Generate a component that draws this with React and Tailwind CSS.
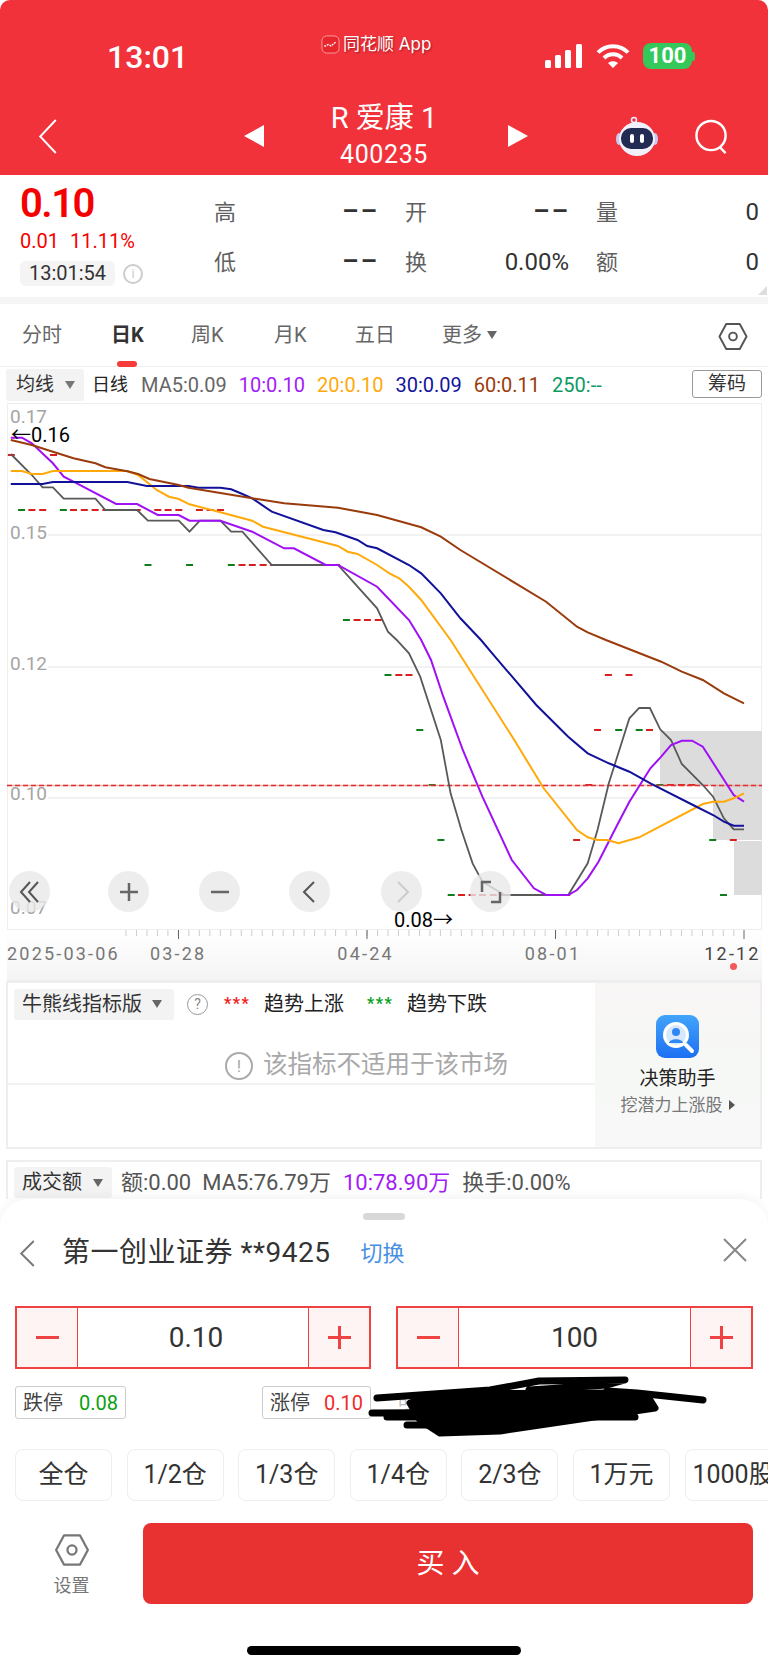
import React from 'react';

const font = "font-['Roboto','Noto_Sans_CJK_SC',sans-serif]";

// chart points are read off the reference: x in 1/2.0417 px, y in 1/3 px from y=300
const toPoints = (arr) => arr.map(([x, y]) => `${(x / 2.0417).toFixed(1)},${(300 + y / 3).toFixed(1)}`).join(' ');

const grayLine = [[22,462],[65,525],[87,562],[108,562],[130,596],[195,596],[215,630],[280,630],[302,662],[365,662],[387,695],[408,662],[450,662],[472,695],[495,695],[555,795],[690,795],[770,925],[792,995],[810,1020],[835,1060],[858,1130],[900,1320],[920,1480],[942,1590],[965,1690],[985,1745],[1030,1785],[1160,1785],[1200,1690],[1220,1590],[1243,1450],[1285,1255],[1305,1224],[1327,1224],[1348,1288],[1370,1320],[1392,1392],[1435,1455],[1456,1490],[1478,1555],[1498,1588],[1519,1588]];
const purpleLine = [[22,413],[45,413],[65,430],[108,490],[130,530],[150,545],[237,612],[280,612],[322,645],[365,645],[387,662],[450,662],[515,695],[580,745],[600,745],[665,795],[690,795],[770,860],[835,960],[860,1020],[880,1080],[905,1190],[945,1350],[985,1490],[1045,1680],[1090,1765],[1115,1785],[1160,1785],[1178,1770],[1200,1735],[1222,1685],[1262,1570],[1285,1505],[1328,1405],[1350,1370],[1370,1335],[1392,1322],[1413,1322],[1435,1340],[1498,1485],[1519,1505]];
const orangeLine = [[22,513],[45,513],[65,522],[87,522],[108,513],[260,513],[282,525],[320,570],[345,590],[365,597],[387,613],[450,637],[515,662],[537,680],[690,738],[710,755],[730,762],[770,795],[795,820],[815,835],[835,860],[860,900],[920,1020],[1050,1320],[1110,1465],[1178,1590],[1200,1612],[1220,1620],[1240,1620],[1263,1630],[1305,1612],[1435,1512],[1456,1505],[1478,1505],[1498,1495],[1519,1480]];
const blueLine = [[22,552],[87,552],[108,546],[260,546],[300,558],[385,558],[405,563],[450,563],[472,568],[495,582],[515,595],[555,635],[660,690],[685,697],[730,720],[750,738],[770,745],[835,795],[860,820],[900,880],[940,955],[982,1020],[1005,1060],[1095,1215],[1160,1310],[1200,1360],[1243,1390],[1285,1415],[1328,1450],[1415,1515],[1456,1545],[1478,1565],[1498,1577],[1519,1577]];
const brownLine = [[22,420],[65,435],[108,455],[150,475],[195,490],[215,502],[260,514],[282,522],[305,537],[365,555],[385,563],[515,595],[580,610],[690,623],[770,645],[860,682],[900,710],[940,750],[1115,905],[1178,980],[1200,997],[1237,1020],[1350,1085],[1392,1115],[1435,1140],[1478,1180],[1519,1210]];

const RED = '#d81e1e';
const GREEN = '#0f7d1a';
const dashRows = [
  [455, RED, [16, 102]],
  [510, GREEN, [37, 122]],
  [510, RED, [58, 80, 143, 165, 187, 209, 230, 252, 273, 315, 336, 358, 400, 422, 443]],
  [565, GREEN, [295, 380, 465]],
  [565, RED, [487, 508, 530, 551, 573, 594, 616, 637, 659, 680]],
  [620, GREEN, [700]],
  [620, RED, [722, 743, 765]],
  [675, GREEN, [785]],
  [675, RED, [807, 828, 1235, 1277]],
  [730, GREEN, [850, 1256, 1298]],
  [730, RED, [1213, 1319]],
  [785, GREEN, [875, 1340]],
  [785, RED, [1195, 1362, 1384, 1405]],
  [840, GREEN, [893, 1448]],
  [840, RED, [1170, 1490]],
  [895, GREEN, [914, 1470]],
  [895, RED, [935, 957, 978, 1000, 1021, 1043, 1064, 1085, 1107, 1128, 1150]],
];

const HexIcon = ({ className }) => (
  <svg viewBox="0 0 32 30" fill="none" className={className}>
    <path d="M9 2h14l7 13-7 13H9L2 15z" stroke="currentColor" strokeWidth="2" strokeLinejoin="round" />
    <circle cx="16" cy="15" r="4" stroke="currentColor" strokeWidth="2" />
  </svg>
);

const Caret = ({ className }) => (
  <span className={`w-0 h-0 border-x-[5px] border-x-transparent border-t-[8px] ${className}`} />
);

function StatusBar() {
  return (
    <div className="relative h-[85px] text-white">
      <div className="absolute left-[107px] top-[40px] text-[32px] leading-[34px] font-medium">13:01</div>
      <div className="absolute left-[321px] top-[34px] flex items-center gap-[3px]">
        <svg viewBox="0 0 20 20" className="w-[19px] h-[19px]">
          <rect x="1" y="1" width="18" height="18" rx="5" fill="#e8262d" stroke="#f7a0a0" />
          <path d="M3.5 12l4-2 3 1.500 5-4" fill="none" stroke="#fff" strokeWidth="1.500" strokeDasharray="2 1" />
        </svg>
        <span className="text-[17px] leading-[20px] font-['Inter','Noto_Sans_CJK_SC',sans-serif] [text-shadow:1px_1px_2px_rgba(90,0,0,0.5)]">同花顺 App</span>
      </div>
      <svg viewBox="0 0 38 24" className="absolute left-[545px] top-[44px] w-[38px] h-[24px]" fill="#fff">
        <rect x="0" y="16" width="6" height="8" rx="1.500" />
        <rect x="10" y="11" width="6" height="13" rx="1.500" />
        <rect x="20" y="6" width="6" height="18" rx="1.500" />
        <rect x="31" y="0" width="6" height="24" rx="1.500" />
      </svg>
      <svg viewBox="0 0 34 26" className="absolute left-[596px] top-[43px] w-[34px] h-[26px]" fill="none" stroke="#fff" strokeWidth="4">
        <path d="M2 9.500C10 1 24 1 32 9.500" />
        <path d="M8 15c5-5 13-5 18 0" />
        <path d="M17 25l-5-5c3-2.500 7-2.500 10 0z" fill="#fff" stroke="none" />
      </svg>
      <div className="absolute left-[643px] top-[43px] flex items-center">
        <div className="w-[49px] h-[26px] rounded-[8px] bg-[#34c759] text-[22px] leading-[26px] font-bold text-center">100</div>
        <div className="w-[3px] h-[9px] rounded-r-[2px] bg-[#34c759]" />
      </div>
    </div>
  );
}

function NavBar() {
  return (
    <div className="relative h-[90px] text-white">
      <svg viewBox="0 0 20 36" className="absolute left-[38px] top-[34px] w-[20px] h-[35px]" fill="none" stroke="#fff" strokeWidth="2">
        <path d="M18 1L2 18l16 17" />
      </svg>
      <span className="absolute left-[244px] top-[40px] w-0 h-0 border-y-[11px] border-y-transparent border-r-[20px] border-r-white" />
      <span className="absolute left-[508px] top-[40px] w-0 h-0 border-y-[11px] border-y-transparent border-l-[20px] border-l-white" />
      <div className="flex flex-col items-center">
        <div className="h-[47px] pt-[15px] text-[29px] leading-[36px]">R 爱康 1</div>
        <div className="pt-[8px] text-[25px] leading-[30px] tracking-[0.6px]">400235</div>
      </div>
      <svg viewBox="0 0 42 40" className="absolute left-[616px] top-[31px] w-[42px] h-[40px]">
        <circle cx="18" cy="4" r="2.500" fill="none" stroke="#eef" strokeWidth="1.500" />
        <ellipse cx="3" cy="23" rx="3" ry="6" fill="#c9c8f2" />
        <ellipse cx="39" cy="23" rx="3" ry="6" fill="#c9c8f2" />
        <ellipse cx="21" cy="23" rx="18" ry="17" fill="#f2f1fb" />
        <rect x="5" y="12" width="32" height="21" rx="10" fill="#222c52" />
        <rect x="14" y="18" width="4" height="9" rx="2" fill="#fff" />
        <rect x="24" y="18" width="4" height="9" rx="2" fill="#fff" />
      </svg>
      <svg viewBox="0 0 36 36" className="absolute left-[694px] top-[34px] w-[36px] h-[35px]" fill="none" stroke="#fff" strokeWidth="2.500">
        <circle cx="17" cy="17" r="15" />
        <path d="M26 29l6 6" />
      </svg>
    </div>
  );
}

function QuoteCell({ label, value }) {
  return (
    <div className="flex justify-between items-center h-[50px]">
      <span className="text-[22px] text-[#5f5f5f]">{label}</span>
      {value === '--' ? (
        <span className="origin-right scale-x-[1.8] -translate-y-[2px] text-[26px] font-bold text-[#333]">--</span>
      ) : (
        <span className="text-[24px] text-[#333]">{value}</span>
      )}
    </div>
  );
}

function Quote() {
  return (
    <div className="relative flex h-[122px] bg-white">
      <div className="w-[214px] pl-[20px] pt-[6px] shrink-0">
        <div className="text-[40px] leading-[46px] font-semibold text-[#f50000] tracking-[-1.500px]">0.10</div>
        <div className="flex gap-[11px] text-[20px] leading-[22px] mt-[3px] text-[#f50000]">
          <span>0.01</span>
          <span>11.11%</span>
        </div>
        <div className="flex items-center gap-[8px] mt-[9px]">
          <span className="w-[95px] h-[25px] rounded-[6px] bg-[#f4f4f4] text-[20px] leading-[25px] text-center text-[#333]">13:01:54</span>
          <span className="w-[20px] h-[20px] rounded-full border-2 border-[#ccc] text-[13px] leading-[16px] text-center text-[#ccc]">i</span>
        </div>
      </div>
      <div className="grid grid-cols-[164px_164px_163px] gap-x-[27px] pt-[12px] h-fit">
        <QuoteCell label="高" value="--" />
        <QuoteCell label="开" value="--" />
        <QuoteCell label="量" value="0" />
        <QuoteCell label="低" value="--" />
        <QuoteCell label="换" value="0.00%" />
        <QuoteCell label="额" value="0" />
      </div>
      <span className="absolute right-[1px] bottom-[2px] w-0 h-0 border-l-[9px] border-l-transparent border-b-[9px] border-b-[#ddd]" />
    </div>
  );
}

function Tabs() {
  const tabs = [
    { text: '分时', w: 'w-[89px]' },
    { text: '日K', w: 'w-[80px]', active: true },
    { text: '周K', w: 'w-[83px]' },
    { text: '月K', w: 'w-[81px]' },
    { text: '五日', w: 'w-[87px]' },
  ];
  return (
    <div className="relative flex items-center h-[63px] pl-[22px] border-b border-[#eee] text-[20px] text-[#666]">
      {tabs.map(t => (
        <span key={t.text} className={`${t.w} ${t.active ? 'font-bold text-[#333]' : ''}`}>{t.text}</span>
      ))}
      <span className="flex items-center gap-[5px]">更多<Caret className="border-t-[#666]" /></span>
      <HexIcon className="absolute left-[717px] top-[18px] w-[32px] h-[29px] text-[#555]" />
      <span className="absolute left-[117px] bottom-[-1px] w-[20px] h-[6px] rounded-full bg-[#f93a3a]" />
    </div>
  );
}

function MaRow() {
  return (
    <div className="relative flex items-center h-[36px] pl-[6px] text-[20px] leading-[24px]">
      <div className="flex items-center w-[78px] h-[32px] pl-[10px] gap-[11px] rounded-[3px] bg-[#f3f3f3] text-[#333] text-[19px]">
        均线<Caret className="border-t-[#777]" />
      </div>
      <span className="ml-[8px] text-[18px] text-[#222]">日线</span>
      <span className="ml-[13px] text-[#666]">MA5:0.09</span>
      <span className="ml-[12px] text-[#a21cf5]">10:0.10</span>
      <span className="ml-[12px] text-[#ffa90a]">20:0.10</span>
      <span className="ml-[12px] text-[#14149c]">30:0.09</span>
      <span className="ml-[12px] text-[#9a3b0c]">60:0.11</span>
      <span className="ml-[12px] text-[#109a63]">250:--</span>
      <span className="absolute left-[692px] top-[3px] w-[70px] h-[28px] rounded-[3px] border border-[#999] text-center text-[19px] leading-[26px] text-[#333]">筹码</span>
    </div>
  );
}

const ChartButton = ({ children, className }) => (
  <span className={`flex items-center justify-center w-[41px] h-[41px] rounded-full bg-[#e8e8e8]/80 ${className}`}>{children}</span>
);

function Chart() {
  const iconCls = 'w-[24px] h-[24px]';
  return (
    <div className="relative w-[755px] h-[527px] ml-[7px] shadow-[inset_0_0_0_1px_#eee]">
      <svg viewBox="7 403 755 527" className="absolute inset-0 w-[755px] h-[527px]" fill="none">
        <path d="M48 535H761M48 667H761M48 798H761" stroke="#eee" strokeWidth="1.500" />
        <path d="M660 731h102v54h-102zM713 785h49v55h-49zM734 841h28v54h-28z" fill="#dcdcdc" />
        {dashRows.map(([y, color, xs], i) => xs.map(x => (
          <path key={`${i}-${x}`} d={`M${(x / 2.0417).toFixed(1)} ${y}h7`} stroke={color} strokeWidth="2" />
        )))}
        <path d="M7 785.500H762" stroke="#e87070" strokeOpacity="0.5" strokeWidth="1.500" />
        <path d="M7 785.500H762" stroke="#e03030" strokeWidth="1.500" strokeDasharray="5 3" />
        <polyline points={toPoints(grayLine)} stroke="#595959" strokeWidth="1.800" />
        <polyline points={toPoints(purpleLine)} stroke="#a010f5" strokeWidth="2" />
        <polyline points={toPoints(orangeLine)} stroke="#ffa90a" strokeWidth="2" />
        <polyline points={toPoints(blueLine)} stroke="#11119a" strokeWidth="2" />
        <polyline points={toPoints(brownLine)} stroke="#9a3b0c" strokeWidth="2" />
      </svg>

      <span className="absolute left-[3px] top-[6px] text-[19px] leading-[16px] text-[#a5a5a5]">0.17</span>
      <span className="absolute left-[4px] top-[22px] text-[20px] leading-[20px] text-black">←0.16</span>
      <span className="absolute left-[3px] top-[118px] text-[19px] leading-[24px] text-[#a5a5a5]">0.15</span>
      <span className="absolute left-[3px] top-[249px] text-[19px] leading-[24px] text-[#a5a5a5]">0.12</span>
      <span className="absolute left-[3px] top-[379px] text-[19px] leading-[24px] text-[#a5a5a5]">0.10</span>
      <span className="absolute left-[3px] top-[493px] text-[19px] leading-[24px] text-[#a5a5a5]">0.07</span>
      <span className="absolute left-[387px] top-[505px] text-[20px] leading-[24px] text-black">0.08→</span>

      <div className="absolute left-[2px] top-[468px] flex">
        <ChartButton>
          <svg viewBox="0 0 24 24" className={iconCls} fill="none" stroke="#555" strokeWidth="2"><path d="M12 2L3 12l9 10M20 2l-9 10 9 10" /></svg>
        </ChartButton>
        <ChartButton className="ml-[58px]">
          <svg viewBox="0 0 24 24" className={iconCls} fill="none" stroke="#666" strokeWidth="2.500"><path d="M12 3v18M3 12h18" /></svg>
        </ChartButton>
        <ChartButton className="ml-[50px]">
          <svg viewBox="0 0 24 24" className={iconCls} fill="none" stroke="#666" strokeWidth="2.500"><path d="M3 12h18" /></svg>
        </ChartButton>
        <ChartButton className="ml-[49px]">
          <svg viewBox="0 0 24 24" className={iconCls} fill="none" stroke="#555" strokeWidth="2"><path d="M16 2L6 12l10 10" /></svg>
        </ChartButton>
        <ChartButton className="ml-[51px]">
          <svg viewBox="0 0 24 24" className={iconCls} fill="none" stroke="#ccc" strokeWidth="2"><path d="M8 2l10 10L8 22" /></svg>
        </ChartButton>
        <ChartButton className="ml-[48px]">
          <svg viewBox="0 0 24 24" className={iconCls} fill="none" stroke="#666" strokeWidth="2.500"><path d="M3 12V2h9M21 12v10h-9" /></svg>
        </ChartButton>
      </div>
    </div>
  );
}

function XAxis() {
  const ticks = [];
  for (let x = 126; x <= 744; x += 10.48) ticks.push(x);
  return (
    <div className="relative h-[51px] w-[755px] ml-[7px] border-b border-[#eee] bg-gradient-to-b from-white to-[#f4f4f4]">
      <svg viewBox="7 0 755 12" className="absolute left-0 top-0 w-[755px] h-[12px]">
        {ticks.map(x => <path key={x} d={`M${x} 0v6`} stroke="#ccc" />)}
        {[178.5, 367, 555.5, 744].map(x => <path key={x} d={`M${x} 0v9`} stroke="#666" />)}
      </svg>
      <div className="flex pt-[12px] text-[18px] leading-[24px] tracking-[2.200px] text-[#777] whitespace-nowrap">
        <span className="shrink-0">2025-03-06</span>
        <span className="shrink-0 ml-[30px]">03-28</span>
        <span className="shrink-0 ml-[131px]">04-24</span>
        <span className="shrink-0 ml-[131px]">08-01</span>
        <span className="shrink-0 ml-[123px] text-[#444]">12-12</span>
      </div>
      <span className="absolute left-[723px] top-[33px] w-[7px] h-[7px] rounded-full bg-[#f25a5a]" />
    </div>
  );
}

function BullBear() {
  return (
    <div className="flex w-[756px] h-[168px] ml-[6px] border-2 border-[#eee] bg-white">
      <div className="relative w-[587px] shrink-0">
        <div className="flex items-center h-[41px] pl-[6px] pt-[1px]">
          <div className="flex items-center w-[160px] h-[31px] pl-[8px] gap-[10px] rounded-[3px] bg-[#f3f3f3] text-[20px] text-[#333]">
            牛熊线指标版<Caret className="border-t-[#666]" />
          </div>
          <span className="ml-[13px] w-[21px] h-[21px] rounded-full border border-[#999] text-[14px] leading-[19px] text-center text-[#888]">?</span>
          <span className="ml-[16px] w-[30px] text-[16px] font-bold tracking-[1.500px] text-[#f02020]">***</span>
          <span className="ml-[10px] text-[20px] text-[#222]">趋势上涨</span>
          <span className="ml-[23px] w-[30px] text-[16px] font-bold tracking-[1.500px] text-[#0aa020]">***</span>
          <span className="ml-[10px] text-[20px] text-[#222]">趋势下跌</span>
        </div>
        <div className="flex items-center h-[61px] pl-[217px] pt-[24px] border-b-2 border-[#f2f2f2] text-[24.500px] text-[#a8a8a8]">
          <span className="w-[28px] h-[28px] rounded-full border-2 border-[#aaa] text-[17px] leading-[24px] text-center">!</span>
          <span className="ml-[10px]">该指标不适用于该市场</span>
        </div>
      </div>
      <div className="flex-1 flex flex-col items-center pt-[32px] bg-gradient-to-b from-[#f9f6f6] via-[#f5f8f5] to-[#f8f8f8]">
        <svg viewBox="0 0 43 43" className="w-[43px] h-[43px]">
          <defs>
            <linearGradient id="aiBlue" x1="0" y1="0" x2="0" y2="1">
              <stop offset="0" stopColor="#42a4fb" />
              <stop offset="1" stopColor="#1d6ff2" />
            </linearGradient>
          </defs>
          <rect width="43" height="43" rx="9" fill="url(#aiBlue)" />
          <circle cx="20" cy="20" r="13" fill="#fff" />
          <circle cx="20" cy="20" r="10" fill="#d5e8fd" />
          <circle cx="20" cy="17" r="4" fill="#2f86f5" />
          <path d="M13 28c1-5 13-5 14 0z" fill="#2f86f5" />
          <path d="M30 30l6 6" stroke="#fff" strokeWidth="4" strokeLinecap="round" />
        </svg>
        <div className="mt-[8px] text-[19px] leading-[26px] text-[#222]">决策助手</div>
        <div className="flex items-center gap-[6px] text-[17px] leading-[26px] text-[#777]">
          挖潜力上涨股
          <span className="w-0 h-0 border-y-[5px] border-y-transparent border-l-[6px] border-l-[#555]" />
        </div>
      </div>
    </div>
  );
}

function Volume() {
  return (
    <div className="flex items-start w-[756px] h-[39px] ml-[6px] mt-[11px] pl-[6px] pt-[5px] border-x-2 border-t-2 border-[#eee] text-[22px] leading-[31px]">
      <div className="flex items-center w-[98px] h-[31px] pl-[8px] gap-[11px] rounded-[3px] bg-[#f3f3f3] text-[20px] text-[#333]">
        成交额<Caret className="border-t-[#666]" />
      </div>
      <span className="ml-[9px] text-[#555]">额:0.00</span>
      <span className="ml-[11px] text-[#555]">MA5:76.79万</span>
      <span className="ml-[12px] text-[#a21cf5]">10:78.90万</span>
      <span className="ml-[12px] text-[#555]">换手:0.00%</span>
    </div>
  );
}

function Stepper({ value, className, valueClass }) {
  return (
    <div className={`flex h-[63px] border-2 border-[#ef4343] ${className}`}>
      <span className="flex items-center justify-center w-[60px] bg-[#fff4f4]">
        <span className="w-[23px] h-[3px] bg-[#ef4343]" />
      </span>
      <span className={`flex-1 border-x border-[#ef4343] text-center text-[28px] leading-[59px] text-[#333] ${valueClass}`}>{value}</span>
      <span className="relative flex items-center justify-center w-[60px] bg-[#fff4f4]">
        <span className="w-[23px] h-[3px] bg-[#ef4343]" />
        <span className="absolute w-[3px] h-[23px] bg-[#ef4343]" />
      </span>
    </div>
  );
}

const LimitTag = ({ label, value, color, className }) => (
  <span className={`flex items-center justify-between h-[33px] px-[7px] rounded-[3px] border border-[#ccc] text-[20px] ${className}`}>
    <span className="text-[#444]">{label}</span>
    <span className={color}>{value}</span>
  </span>
);

function Sheet() {
  const presets = ['全仓', '1/2仓', '1/3仓', '1/4仓', '2/3仓', '1万元', '1000股'];
  return (
    <div className="relative h-[470px] rounded-t-[28px] bg-white shadow-[0_-4px_10px_rgba(0,0,0,0.04)] overflow-hidden">
      <div className="w-[42px] h-[7px] mx-auto mt-[14px] rounded-full bg-[#d8d8d8]" />
      <div className="relative flex items-center h-[52px] mt-[7px] pl-[62px]">
        <svg viewBox="0 0 16 28" className="absolute left-[19px] top-[13px] w-[16px] h-[27px]" fill="none" stroke="#777" strokeWidth="2"><path d="M15 1L2 14l13 13" /></svg>
        <span className="text-[28px] tracking-[0.5px] text-[#333]">第一创业证券 **9425</span>
        <span className="ml-[30px] text-[22px] text-[#4a90e2]">切换</span>
        <svg viewBox="0 0 24 24" className="absolute left-[723px] top-[11px] w-[24px] h-[24px]" fill="none" stroke="#888" strokeWidth="2"><path d="M1 1l22 22M23 1L1 23" /></svg>
      </div>
      <div className="flex gap-[25px] pl-[15px] mt-[27px]">
        <Stepper value="0.10" className="w-[356px]" valueClass="pl-[6px]" />
        <Stepper value="100" className="w-[357px]" />
      </div>
      <div className="relative flex pl-[15px] mt-[17px]">
        <LimitTag label="跌停" value="0.08" color="text-[#0aa00f]" className="w-[111px]" />
        <LimitTag label="涨停" value="0.10" color="text-[#f02a2a]" className="w-[109px] ml-[136px]" />
        <span className="ml-[26px] text-[16px] leading-[33px] text-[#bbb]">可</span>
        <svg viewBox="0 1366 768 80" className="absolute left-0 top-[-20px] w-[768px] h-[80px]" fill="#000" stroke="#000" strokeWidth="7" strokeLinecap="round" strokeLinejoin="round">
          <path d="M377 1398L490 1390L539 1381L625 1380L607 1385L529 1390" fill="none" />
          <path d="M607 1391L637 1393L703 1400" fill="none" />
          <path d="M440 1394L620 1393L650 1400L655 1408L560 1422L500 1431L440 1433L420 1420L410 1403z" />
          <path d="M372 1413L539 1412M387 1417L635 1417M407 1425L490 1425" fill="none" />
        </svg>
      </div>
      <div className="flex gap-[14.600px] pl-[15px] mt-[30px] w-[820px]">
        {presets.map(p => (
          <span key={p} className="w-[97px] h-[52px] shrink-0 rounded-[8px] border border-[#eee] text-center text-[25px] leading-[50px] text-[#333] whitespace-nowrap">{p}</span>
        ))}
      </div>
      <div className="flex mt-[22px] pl-[15px] pr-[15px]">
        <div className="flex flex-col items-center w-[113px] pt-[10px] text-[#777]">
          <HexIcon className="w-[38px] h-[34px]" />
          <span className="mt-[6px] text-[18px] leading-[26px]">设置</span>
        </div>
        <div className="flex-1 ml-[15px] h-[81px] rounded-[8px] bg-[#e83232] text-center text-[28px] leading-[81px] text-white">买 入</div>
      </div>
      <div className="absolute left-[247px] top-[447px] w-[274px] h-[9px] rounded-full bg-black" />
    </div>
  );
}

export default function App() {
  return (
    <div className={`w-[768px] h-[1669px] overflow-hidden bg-white ${font}`}>
      <div className="h-[175px] rounded-t-[10px] bg-[#f1323b]">
        <StatusBar />
        <NavBar />
      </div>
      <Quote />
      <div className="h-[7px] bg-[#f5f5f5]" />
      <Tabs />
      <MaRow />
      <Chart />
      <XAxis />
      <BullBear />
      <Volume />
      <Sheet />
    </div>
  );
}
